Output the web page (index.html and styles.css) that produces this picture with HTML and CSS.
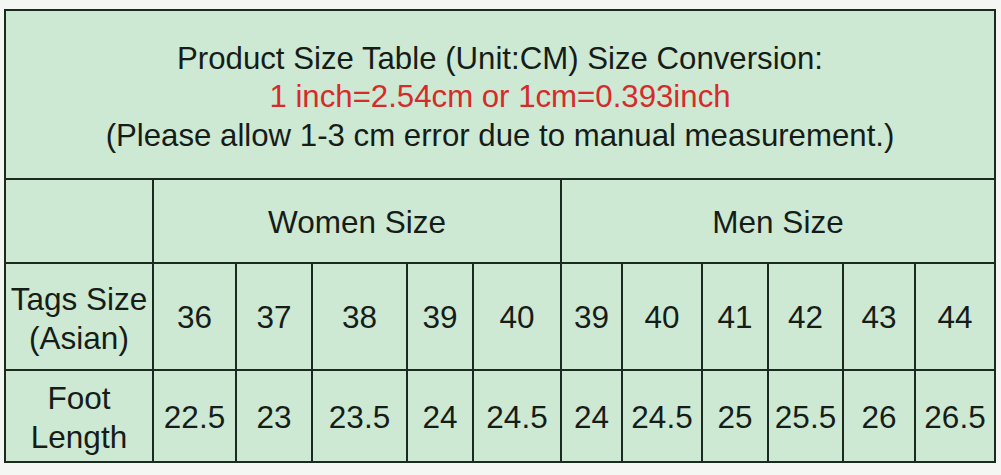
FILE: index.html
```html
<!DOCTYPE html>
<html>
<head>
<meta charset="utf-8">
<link rel="stylesheet" href="styles.css">
</head>
<body>
<div class="page">
  <div class="chart">
    <div class="cell title">
      <div class="t-line">Product Size Table (Unit:CM) Size Conversion:</div>
      <div class="t-line red">1 inch=2.54cm or 1cm=0.393inch</div>
      <div class="t-line">(Please allow 1-3 cm error due to manual measurement.)</div>
    </div>
    <div class="cell"></div>
    <div class="cell group women">Women Size</div>
    <div class="cell group men">Men Size</div>

    <div class="cell label">Tags Size<br>(Asian)</div>
    <div class="cell">36</div>
    <div class="cell">37</div>
    <div class="cell">38</div>
    <div class="cell">39</div>
    <div class="cell">40</div>
    <div class="cell">39</div>
    <div class="cell">40</div>
    <div class="cell">41</div>
    <div class="cell">42</div>
    <div class="cell">43</div>
    <div class="cell">44</div>

    <div class="cell label">Foot<br>Length</div>
    <div class="cell">22.5</div>
    <div class="cell">23</div>
    <div class="cell">23.5</div>
    <div class="cell">24</div>
    <div class="cell">24.5</div>
    <div class="cell">24</div>
    <div class="cell">24.5</div>
    <div class="cell">25</div>
    <div class="cell">25.5</div>
    <div class="cell">26</div>
    <div class="cell">26.5</div>
  </div>
</div>
</body>
</html>
```
FILE: styles.css
```css
html, body {
  margin: 0;
  padding: 0;
}
body {
  background: #f3f6f3;
  font-family: "Liberation Sans", Arial, sans-serif;
  color: #161c18;
  width: 1001px;
  height: 475px;
  overflow: hidden;
}
.page {
  padding: 9px 0 0 4px;
}
.chart {
  display: grid;
  grid-template-columns: 146px 81px 74px 93px 64px 86px 59px 78px 64px 73px 70px 78px;
  grid-template-rows: 167px 82px 105px 90px;
  gap: 2px;
  padding: 2px;
  width: 988px;
  background: #1b2a1f;
}
.cell {
  background: #cde9d3;
  display: flex;
  align-items: center;
  justify-content: center;
  text-align: center;
  font-size: 31.5px;
  line-height: 39px;
  padding-top: 2px;
}
.title {
  grid-column: 1 / -1;
  flex-direction: column;
  padding-top: 6px;
  font-size: 31.2px;
  line-height: 38.5px;
}
.t-line {
  white-space: nowrap;
}
.red {
  color: #d62b2b;
}
.women {
  grid-column: 2 / 7;
}
.men {
  grid-column: 7 / 13;
}
.label {
  white-space: nowrap;
  padding-top: 4px;
}
```
